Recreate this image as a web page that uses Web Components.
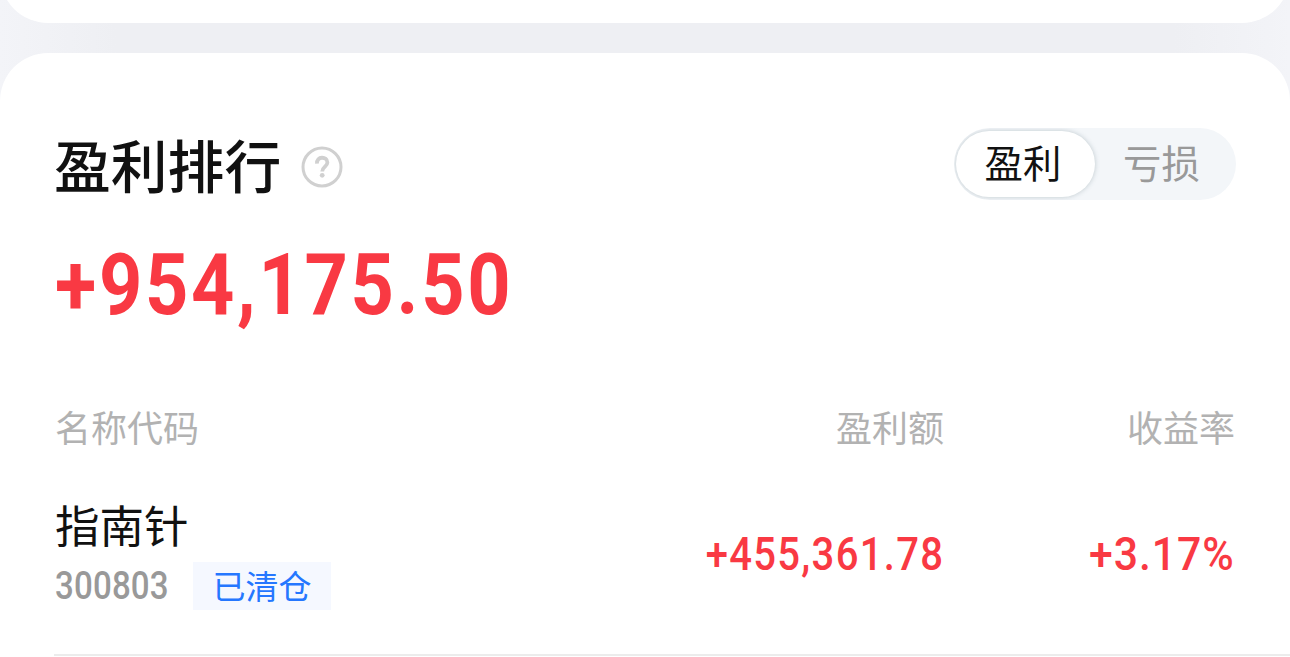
<!DOCTYPE html>
<html lang="zh-CN">
<head>
<meta charset="utf-8">
<title>盈利排行</title>
<style>
html,body{margin:0;height:657px;overflow:hidden}
body{font-family:"Noto Sans CJK SC",sans-serif;color:#111}
</style>
</head>
<body>
<profit-page></profit-page>
<script>
const define=(name,html)=>{
  const t=document.createElement('template');
  t.innerHTML=html;
  customElements.define(name,class extends HTMLElement{
    constructor(){super();this.attachShadow({mode:'open'}).appendChild(t.content.cloneNode(true));}
  });
};

define('panel-card',`<style>
:host{display:block;box-sizing:border-box;background:#fff;border-radius:48px}
</style><slot></slot>`);

/* Condensed numerals: the face is narrowed with a scale, origin set by its user. */
define('din-number',`<style>
:host{display:block;font-family:Roboto,sans-serif;white-space:nowrap}
span{display:inline-block;transform:scaleX(var(--sx,1));transform-origin:var(--origin,left) center}
</style><span><slot></slot></span>`);

define('help-icon',`<style>
:host{display:block;width:42px;height:42px}
svg{display:block}
</style><svg width="42" height="42" viewBox="0 0 42 42" fill="none" stroke="#d0d0d0">
<circle cx="21" cy="21" r="19" stroke-width="3"/>
<path d="M16 17.6C15.2 10 26.4 10 26.4 16.5C26.4 20.4 21.2 20.8 21.2 25.4" stroke-width="3.8"/>
<circle cx="21.2" cy="29.3" r="2.4" fill="#d0d0d0" stroke="none"/></svg>`);

define('segment-switch',`<style>
:host{display:flex;box-sizing:border-box;width:282px;height:72px;padding:3px 2px;border-radius:36px;background:#f3f6f9;overflow:hidden;font-size:38.4px;line-height:60px}
div{flex:1;text-align:center;border-radius:33px;color:#999}
.on{flex:0 0 139px;box-sizing:border-box;padding-right:5px;background:#fff;color:#111;box-shadow:0 0 5px rgba(70,95,105,.3)}
.off{padding-right:6px}
</style><div class="on"><slot name="on"></slot></div><div class="off"><slot name="off"></slot></div>`);

define('status-tag',`<style>
:host{display:block;width:138px;height:48px;background:#f5f8ff;color:#2577ff;font-size:33px;line-height:46px;text-align:center}
</style><slot></slot>`);

define('rank-row',`<style>
:host{display:grid;grid-template-columns:1fr 340px 291px;padding:0 55px 0 1px}
::slotted([slot=gain]),::slotted([slot=rate]){text-align:right}
</style><slot name="name"></slot><slot name="gain"></slot><slot name="rate"></slot>`);

define('profit-page',`<style>
:host{display:flex;flex-direction:column;height:657px;overflow:hidden;background:linear-gradient(90deg,#f3f4f8,#eeeff3 9%,#eeeff3 91%,#f3f4f8)}
.prev{height:96px;flex:none;margin-top:-73px;margin-bottom:30px}
.main{flex:none;height:700px;padding:75px 0 0 54px}
header{display:flex;height:72px;padding-right:54px;align-items:flex-start}
h1{margin:0;width:228px;font-size:56.8px;font-weight:500;line-height:71px;white-space:nowrap}
help-icon{margin:18px auto 0 19px}
.total{margin:35px 0 0 1px;height:100px;line-height:100px;font-size:85px;font-weight:700;color:#f93943;--sx:.89;letter-spacing:3px}
.head{margin-top:67px;height:48px;line-height:48px;font-size:36px;color:#b2b2b2}
.item{margin-top:44px}
.title{font-size:44.5px;line-height:60px;height:60px}
.meta{display:flex;gap:26px;height:48px;margin-top:8px}
.code{width:112px;font-size:38px;font-weight:500;line-height:48px;color:#999;--sx:.87;letter-spacing:.2px}
.num{--origin:right;font-size:46px;font-weight:500;line-height:60px;color:#f93943;--sx:.87;padding-top:30px;letter-spacing:1.5px}
.rate{--sx:.93;letter-spacing:1px}
hr{margin:44px 0 0;border:0;border-top:2px solid #ececec}
</style>
<panel-card class="prev"></panel-card>
<panel-card class="main">
<header><h1>盈利排行</h1><help-icon></help-icon><segment-switch><span slot="on">盈利</span><span slot="off">亏损</span></segment-switch></header>
<din-number class="total">+954,175.50</din-number>
<rank-row class="head"><span slot="name">名称代码</span><span slot="gain">盈利额</span><span slot="rate">收益率</span></rank-row>
<rank-row class="item">
<div slot="name"><div class="title">指南针</div><div class="meta"><din-number class="code">300803</din-number><status-tag>已清仓</status-tag></div></div>
<din-number class="num" slot="gain">+455,361.78</din-number>
<din-number class="num rate" slot="rate">+3.17%</din-number>
</rank-row>
<hr>
</panel-card>`);
</script>
</body>
</html>
